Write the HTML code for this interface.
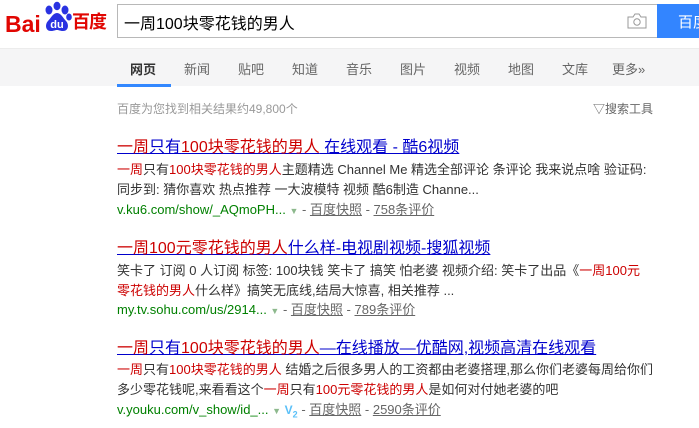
<!DOCTYPE html>
<html><head><meta charset="utf-8"><style>
*{margin:0;padding:0;box-sizing:border-box}
body{width:699px;height:428px;overflow:hidden;background:#fff;font-family:"Liberation Sans","Noto Sans CJK SC",sans-serif;position:relative;color:#333}
.abs{position:absolute;white-space:nowrap}
.nav{position:absolute;left:0;top:48px;width:699px;height:38px;background:#f5f5f6;border-top:1px solid #ececec}
.nav span{position:absolute;top:10px;font-size:13px;color:#666}
.t{font-size:16px;color:#00c;text-decoration:underline}
.r{color:#c00}
.d{font-size:13px;color:#333}
.u{font-size:13px;color:#008000}
.u a{color:#666;text-decoration:underline}
</style></head><body>
<div class="abs" style="left:5px;top:11px;font-size:23px;font-weight:bold;color:#e10602;letter-spacing:0px">Bai</div>
<svg class="abs" style="left:40px;top:1px" width="34" height="34" viewBox="0 0 34 34">
<ellipse cx="9" cy="9" rx="3.5" ry="4.5" fill="#2932e1"/><ellipse cx="17" cy="5" rx="3.5" ry="4.2" fill="#2932e1"/><ellipse cx="25" cy="9" rx="3.5" ry="4.5" fill="#2932e1"/><ellipse cx="29" cy="16" rx="2.8" ry="3.5" fill="#2932e1"/>
<path d="M17 12c-4 0-6 5-9 8-3 3-3 10 3 10 3 0 4-1 6-1s3 1 6 1c6 0 6-7 3-10-3-3-5-8-9-8z" fill="#2932e1"/>
<text x="17" y="27" font-size="11" font-weight="bold" fill="#fff" text-anchor="middle" font-family="Liberation Sans">du</text></svg>
<div class="abs" style="left:72px;top:8px;font-size:18px;font-weight:bold;color:#e10602;letter-spacing:-1px">百度</div>
<div class="abs" style="left:117px;top:4px;width:540px;height:34px;border:1px solid #b8b8b8;border-right:none"></div>
<div class="abs" style="left:124px;top:10px;font-size:16px;color:#000">一周100块零花钱的男人</div>
<svg class="abs" style="left:627px;top:13px" width="20" height="16" viewBox="0 0 20 16"><path d="M1 4h5l2-3h4l2 3h5v11H1z" fill="none" stroke="#999"/><circle cx="10" cy="9" r="3.2" fill="none" stroke="#999"/></svg>
<div class="abs" style="left:657px;top:4px;width:42px;height:34px;background:#3385ff;color:#fff;font-size:15px;padding:7px 0 0 21px">百度</div>
<div class="nav">
<span style="left:130px;color:#333;font-weight:bold">网页</span><span style="left:184px">新闻</span><span style="left:238px">贴吧</span><span style="left:292px">知道</span><span style="left:346px">音乐</span><span style="left:400px">图片</span><span style="left:454px">视频</span><span style="left:508px">地图</span><span style="left:562px">文库</span><span style="left:612px">更多»</span>
<div style="position:absolute;left:117px;top:35px;width:54px;height:3px;background:#4e6ef2;background:#38f"></div>
</div>
<div class="abs" style="left:117px;top:100px;font-size:12px;color:#999">百度为您找到相关结果约49,800个</div>
<div class="abs" style="left:593px;top:100px;font-size:12px;color:#666">▽搜索工具</div>

<div class="abs t" style="left:117px;top:133px"><span class="r">一周</span>只有<span class="r">100块零花钱的男人</span> 在线观看 - 酷6视频</div>
<div class="abs d" style="left:117px;top:159px"><span class="r">一周</span>只有<span class="r">100块零花钱的男人</span>主题精选 Channel Me 精选全部评论 条评论 我来说点啥 验证码:</div>
<div class="abs d" style="left:117px;top:179px">同步到: 猜你喜欢 热点推荐 一大波模特 视频 酷6制造 Channe...</div>
<div class="abs u" style="left:117px;top:199px">v.ku6.com/show/_AQmoPH... <span style="color:#8db98d;font-size:9px">▼</span> <span style="color:#666">- <a>百度快照</a> - <a>758条评价</a></span></div>

<div class="abs t" style="left:117px;top:234px"><span class="r">一周100元零花钱的男人</span>什么样-电视剧视频-搜狐视频</div>
<div class="abs d" style="left:117px;top:260px">笑卡了 订阅 0 人订阅 标签: 100块钱 笑卡了 搞笑 怕老婆 视频介绍: 笑卡了出品《<span class="r">一周100元</span></div>
<div class="abs d" style="left:117px;top:280px"><span class="r">零花钱的男人</span>什么样》搞笑无底线,结局大惊喜, 相关推荐 ...</div>
<div class="abs u" style="left:117px;top:299px">my.tv.sohu.com/us/2914... <span style="color:#8db98d;font-size:9px">▼</span> <span style="color:#666">- <a>百度快照</a> - <a>789条评价</a></span></div>

<div class="abs t" style="left:117px;top:334px"><span class="r">一周</span>只有<span class="r">100块零花钱的男人</span>—在线播放—优酷网,视频高清在线观看</div>
<div class="abs d" style="left:117px;top:359px"><span class="r">一周</span>只有<span class="r">100块零花钱的男人</span> 结婚之后很多男人的工资都由老婆搭理,那么你们老婆每周给你们</div>
<div class="abs d" style="left:117px;top:379px">多少零花钱呢,来看看这个<span class="r">一周</span>只有<span class="r">100元零花钱的男人</span>是如何对付她老婆的吧</div>
<div class="abs u" style="left:117px;top:399px">v.youku.com/v_show/id_... <span style="color:#8db98d;font-size:9px">▼</span> <span style="color:#5bc0f8;font-weight:bold;font-size:12px">V<sub style="font-size:9px">2</sub></span> <span style="color:#666">- <a>百度快照</a> - <a>2590条评价</a></span></div>
</body></html>
